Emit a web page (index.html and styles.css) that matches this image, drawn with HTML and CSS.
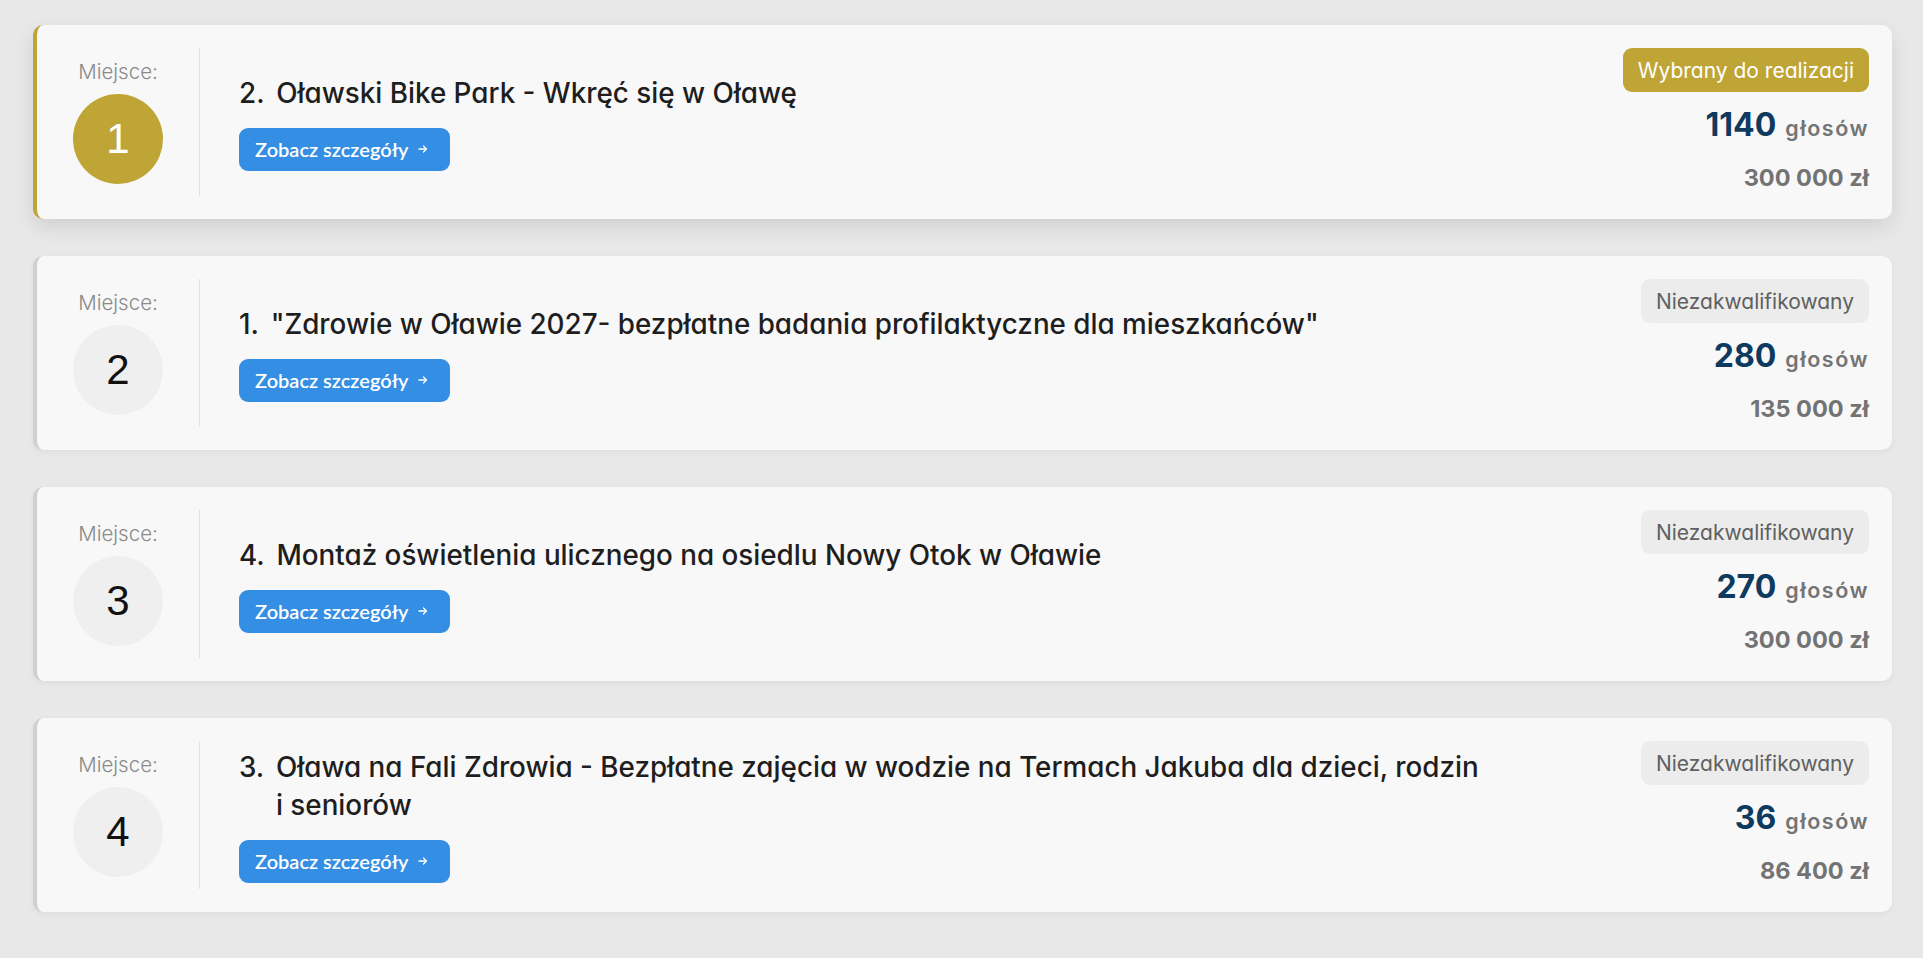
FILE: index.html
```html
<!DOCTYPE html>
<html lang="pl">
<head>
    <meta charset="UTF-8">
    <meta name="viewport" content="width=device-width, initial-scale=1.0">
    <title>Wyniki głosowania</title>
    <link rel="stylesheet" href="styles.css">
</head>
<body>
    <main class="ranking">
        <article class="project project--winner">
            <div class="place">
                <span class="place-label">Miejsce:</span>
                <span class="place-number">1</span>
            </div>
            <div class="project-info">
                <h2 class="project-title"><span class="project-no">2.</span><span>Oławski Bike Park - Wkręć się w Oławę</span></h2>
                <a class="details-btn" href="#">Zobacz szczegóły
                    <svg width="10" height="10" viewBox="0 0 10 10"><path d="M1 5h7.5M5.5 2l3 3-3 3" fill="none" stroke="#fff" stroke-width="1.3" stroke-linecap="round" stroke-linejoin="round"/></svg>
                </a>
            </div>
            <div class="project-stats">
                <span class="status status--selected">Wybrany do realizacji</span>
                <div class="votes"><strong>1140</strong> głosów</div>
                <div class="cost">300 000 zł</div>
            </div>
        </article>

        <article class="project">
            <div class="place">
                <span class="place-label">Miejsce:</span>
                <span class="place-number">2</span>
            </div>
            <div class="project-info">
                <h2 class="project-title"><span class="project-no">1.</span><span>"Zdrowie w Oławie 2027- bezpłatne badania profilaktyczne dla mieszkańców"</span></h2>
                <a class="details-btn" href="#">Zobacz szczegóły
                    <svg width="10" height="10" viewBox="0 0 10 10"><path d="M1 5h7.5M5.5 2l3 3-3 3" fill="none" stroke="#fff" stroke-width="1.3" stroke-linecap="round" stroke-linejoin="round"/></svg>
                </a>
            </div>
            <div class="project-stats">
                <span class="status status--rejected">Niezakwalifikowany</span>
                <div class="votes"><strong>280</strong> głosów</div>
                <div class="cost">135 000 zł</div>
            </div>
        </article>

        <article class="project">
            <div class="place">
                <span class="place-label">Miejsce:</span>
                <span class="place-number">3</span>
            </div>
            <div class="project-info">
                <h2 class="project-title"><span class="project-no">4.</span><span>Montaż oświetlenia ulicznego na osiedlu Nowy Otok w Oławie</span></h2>
                <a class="details-btn" href="#">Zobacz szczegóły
                    <svg width="10" height="10" viewBox="0 0 10 10"><path d="M1 5h7.5M5.5 2l3 3-3 3" fill="none" stroke="#fff" stroke-width="1.3" stroke-linecap="round" stroke-linejoin="round"/></svg>
                </a>
            </div>
            <div class="project-stats">
                <span class="status status--rejected">Niezakwalifikowany</span>
                <div class="votes"><strong>270</strong> głosów</div>
                <div class="cost">300 000 zł</div>
            </div>
        </article>

        <article class="project">
            <div class="place">
                <span class="place-label">Miejsce:</span>
                <span class="place-number">4</span>
            </div>
            <div class="project-info">
                <h2 class="project-title"><span class="project-no">3.</span><span>Oława na Fali Zdrowia - Bezpłatne zajęcia w wodzie na Termach Jakuba dla dzieci, rodzin i seniorów</span></h2>
                <a class="details-btn" href="#">Zobacz szczegóły
                    <svg width="10" height="10" viewBox="0 0 10 10"><path d="M1 5h7.5M5.5 2l3 3-3 3" fill="none" stroke="#fff" stroke-width="1.3" stroke-linecap="round" stroke-linejoin="round"/></svg>
                </a>
            </div>
            <div class="project-stats">
                <span class="status status--rejected">Niezakwalifikowany</span>
                <div class="votes"><strong>36</strong> głosów</div>
                <div class="cost">86 400 zł</div>
            </div>
        </article>
    </main>
</body>
</html>
```

FILE: styles.css
```css
body {
    margin: 0;
    background: #e8e8e8;
    font-family: Inter, "Noto Sans", sans-serif;
    font-feature-settings: "cv11";
    color: #1e1e1e;
}

.ranking {
    display: flex;
    flex-direction: column;
    gap: 37px;
    padding: 25px 31px 40px 33px;
}

.project {
    display: flex;
    align-items: center;
    background: #f8f8f8;
    border-left: 4px solid #d0d0d0;
    border-radius: 10px;
    padding: 23px 23px 23px 0;
    box-shadow: 0 2px 6px rgba(0, 0, 0, 0.05);
}

.project--winner {
    border-left-color: #bfa535;
    box-shadow: 0 8px 20px rgba(0, 0, 0, 0.1);
}

/* left column: place */
.place {
    width: 162px;
    flex-shrink: 0;
    align-self: stretch;
    border-right: 1px solid #e2e2e2;
    display: flex;
    flex-direction: column;
    align-items: center;
    justify-content: center;
}

.place-label {
    font-size: 20.5px;
    font-weight: 300;
    line-height: 24px;
    color: #8a8a8a;
}

.place-number {
    width: 90px;
    height: 90px;
    margin-top: 10px;
    border-radius: 50%;
    background: #efefef;
    display: flex;
    align-items: center;
    justify-content: center;
    font-family: "Liberation Sans", Arial, sans-serif;
    font-size: 42px;
    color: #111;
}

.project--winner .place-number {
    background: #bfa535;
    color: #fff;
}

/* middle column */
.project-info {
    flex: 1;
    padding: 0 157px 0 39px;
}

.project-title {
    margin: 0;
    display: flex;
    gap: 0.42em;
    font-size: 27.8px;
    font-weight: 500;
    line-height: 38px;
    color: #1e1e1e;
}

.details-btn {
    display: inline-flex;
    align-items: center;
    gap: 10px;
    box-sizing: border-box;
    height: 43px;
    margin-top: 16px;
    padding: 0 22px 0 16px;
    background: #348ee4;
    color: #fff;
    border-radius: 9px;
    text-decoration: none;
    font-family: Lato, sans-serif;
    font-size: 20px;
    font-weight: 600;
}

/* right column */
.project-stats {
    flex-shrink: 0;
    display: flex;
    flex-direction: column;
    align-items: flex-end;
}

.status {
    height: 44px;
    padding: 0 15px;
    border-radius: 9px;
    display: flex;
    align-items: center;
    font-size: 21px;
}

.status--selected {
    background: #bfa535;
    color: #fff;
}

.status--rejected {
    background: #ececec;
    color: #606060;
}

.votes {
    margin-top: 13px;
    line-height: 40px;
    font-size: 21.5px;
    font-weight: 600;
    letter-spacing: 1.5px;
    color: #747474;
}

.votes strong {
    margin-right: 2px;
    font-size: 32px;
    font-weight: 700;
    letter-spacing: 0;
    color: #0d3a5e;
}

.cost {
    margin-top: 12px;
    line-height: 36px;
    font-size: 23.5px;
    font-weight: 700;
    color: #737373;
}
```
